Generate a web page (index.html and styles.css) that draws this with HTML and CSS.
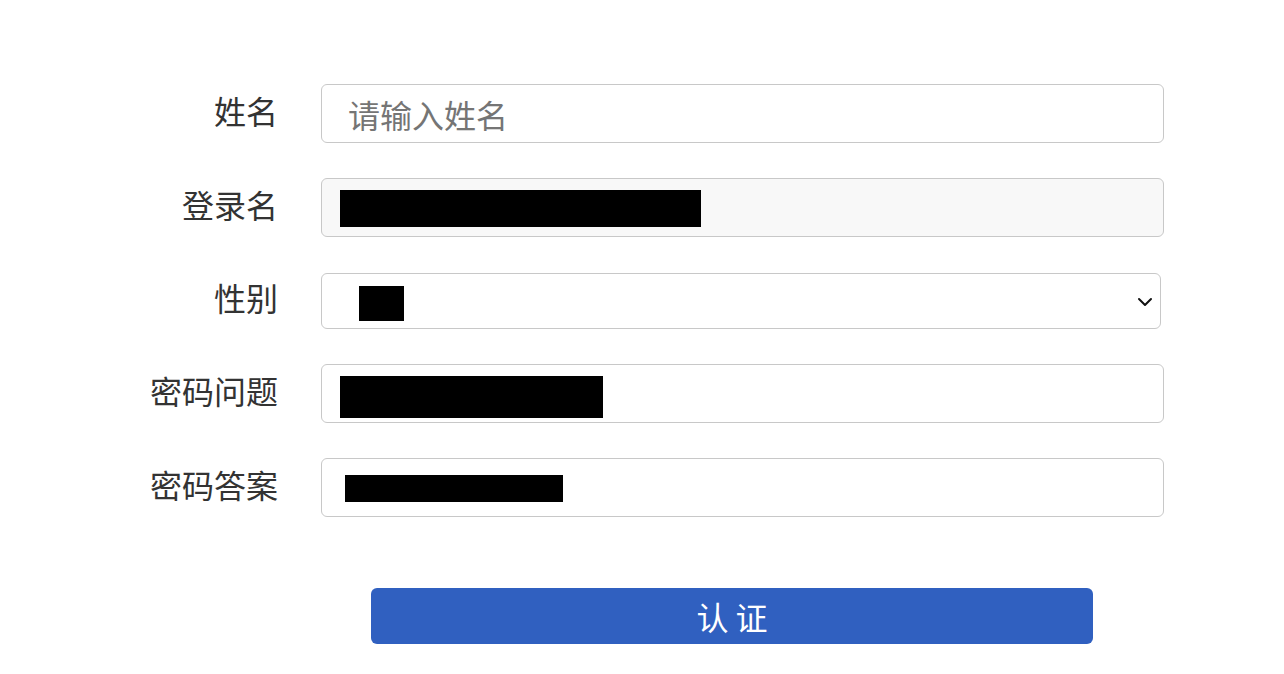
FILE: index.html
```html
<!DOCTYPE html>
<html lang="zh-CN">
<head>
    <meta charset="UTF-8">
    <meta name="viewport" content="width=device-width, initial-scale=1.0">
    <title>认证</title>
    <link rel="stylesheet" href="styles.css">
</head>
<body>
    <form class="auth-form">
        <label class="label" for="name">姓名</label>
        <input class="field" id="name" type="text" placeholder="请输入姓名">

        <label class="label">登录名</label>
        <div class="field field-disabled"><span class="redact redact-login"></span></div>

        <label class="label">性别</label>
        <div class="field field-select">
            <span class="redact redact-gender"></span>
            <svg class="chevron" width="16" height="10" viewBox="0 0 16 10">
                <path d="M2 2 L8 8 L14 2" fill="none" stroke="#111" stroke-width="2" stroke-linecap="round" stroke-linejoin="round"/>
            </svg>
        </div>

        <label class="label">密码问题</label>
        <div class="field"><span class="redact redact-question"></span></div>

        <label class="label">密码答案</label>
        <div class="field"><span class="redact redact-answer"></span></div>

        <div class="actions">
            <button class="submit" type="button">认 证</button>
        </div>
    </form>
</body>
</html>
```

FILE: styles.css
```css
body {
    margin: 0;
    background-color: #fff;
    font-family: "Noto Sans CJK SC", "Noto Sans", sans-serif;
    color: #333;
}

.auth-form {
    display: grid;
    grid-template-columns: 278px 843px;
    column-gap: 43px;
    row-gap: 35px;
    align-items: center;
    padding-top: 84px;
}

.label {
    text-align: right;
    font-size: 32px;
    line-height: 1;
    margin-top: -8px; /* labels sit a little above the field centre */
}

.field {
    box-sizing: border-box;
    height: 59px;
    border: 1px solid #c8c8c8;
    border-radius: 6px;
    background-color: #fff;
    font-family: inherit;
    font-size: 32px;
    color: #333;
    padding: 0 18px;
    display: flex;
    align-items: center;
    outline: none;
}

input.field {
    width: 100%;
    padding-left: 26px;
}

.field::placeholder {
    color: #757575;
}

.field-disabled {
    background-color: #f8f8f8;
}

.field-select {
    height: 56px;
    width: 840px;
    margin-top: 1px;
    justify-content: space-between;
    padding: 0 7px 0 37px;
}

.redact {
    display: block;
    background-color: #000;
}

.redact-login {
    width: 361px;
    height: 37px;
    margin-top: 2px;
}

.redact-gender {
    width: 45px;
    height: 35px;
    margin-top: 4px;
}

.redact-question {
    width: 263px;
    height: 42px;
    margin-top: 6px;
}

.redact-answer {
    width: 218px;
    height: 27px;
    margin-left: 5px;
    margin-top: 1px;
}

.chevron {
    margin-top: 2px;
}

.actions {
    grid-column: 2;
    padding-top: 36px;
    padding-left: 50px;
}

.submit {
    width: 722px;
    height: 56px;
    border: none;
    border-radius: 6px;
    background-color: #3060c0;
    color: #fff;
    font-family: inherit;
    font-size: 32px;
    cursor: pointer;
}
```
